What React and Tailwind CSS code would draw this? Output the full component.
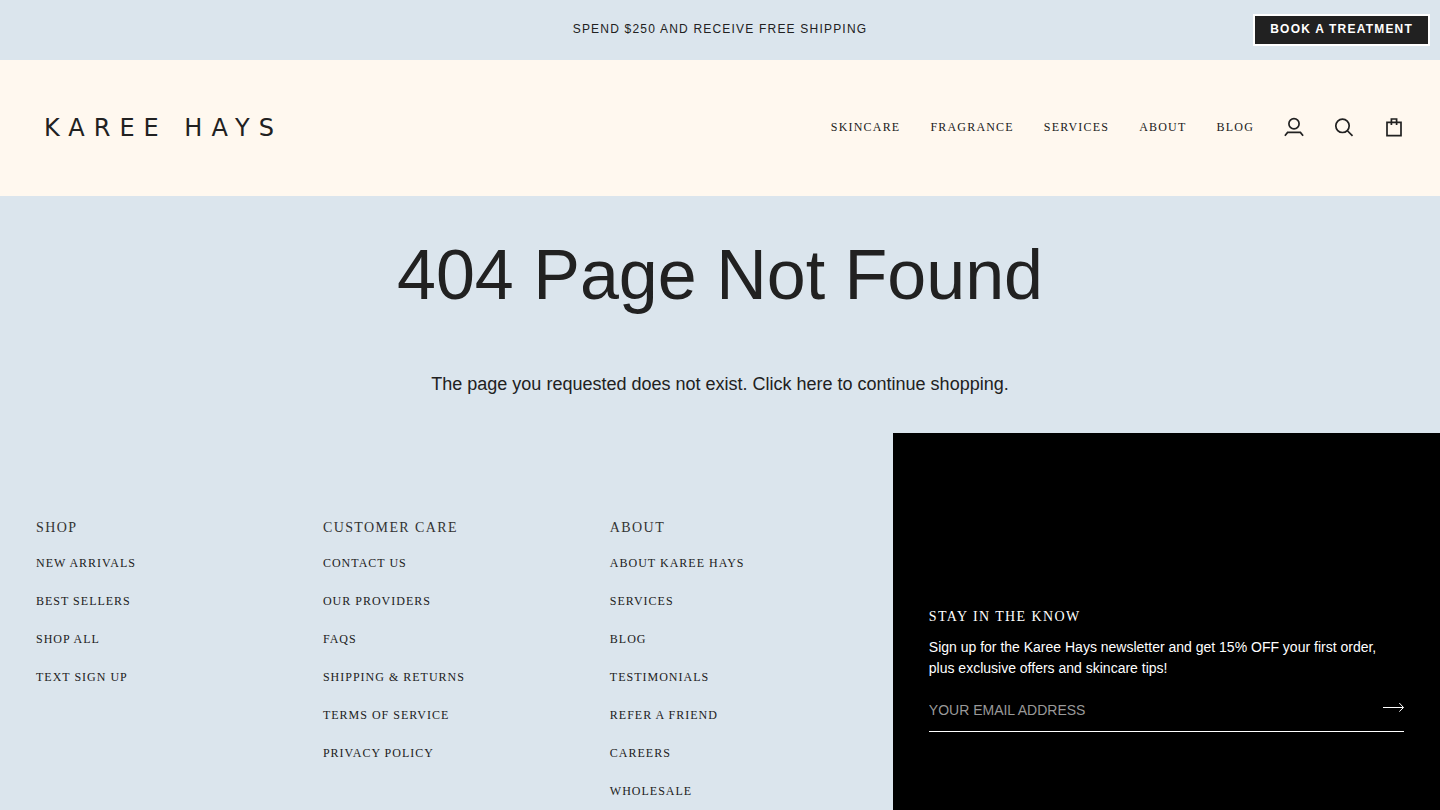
const navLinks = ["Skincare", "Fragrance", "Services", "About", "Blog"];

const footerColumns = [
  { title: "Shop", links: ["New Arrivals", "Best Sellers", "Shop All", "Text Sign Up"] },
  {
    title: "Customer Care",
    links: ["Contact Us", "Our Providers", "FAQs", "Shipping & Returns", "Terms of Service", "Privacy Policy"],
  },
  {
    title: "About",
    links: ["About Karee Hays", "Services", "Blog", "Testimonials", "Refer a Friend", "Careers", "Wholesale"],
  },
];

const sans = "font-['Liberation_Sans',Arial,sans-serif]";
const serif = "font-['Liberation_Serif','Times_New_Roman',serif]";

function AccountIcon() {
  return (
    <svg viewBox="0 0 20 20" className="size-5" fill="none" stroke="currentColor" strokeWidth="1.7" aria-hidden="true">
      <circle cx="10" cy="6.8" r="5.1" />
      <path d="M0.9 18.8 L3.6 15.4 H16.4 L19.1 18.8" />
    </svg>
  );
}

function SearchIcon() {
  return (
    <svg viewBox="0 0 20 20" className="size-5" fill="none" stroke="currentColor" strokeWidth="1.7" aria-hidden="true">
      <circle cx="8.5" cy="8.8" r="6.7" />
      <path d="M13.2 13.5 L18.5 18.8" />
    </svg>
  );
}

function BagIcon() {
  return (
    <svg viewBox="0 0 20 20" className="size-5" fill="none" stroke="currentColor" strokeWidth="1.7" aria-hidden="true">
      <path d="M3 5.4 H17 V18.6 H3 Z" />
      <path d="M7.4 8 V2 H12.6 V8" />
    </svg>
  );
}

function ArrowIcon() {
  return (
    <svg viewBox="0 0 21 10" className="h-[10px] w-[21px]" fill="none" stroke="currentColor" strokeWidth="1" aria-hidden="true">
      <path d="M0 5.5 H20.3 M16.3 1 L20.5 5.5 L16.3 9.6" />
    </svg>
  );
}

function AnnouncementBar() {
  return (
    <div className="grid min-h-[60px] grid-cols-[1fr_auto_1fr] items-center px-[10px] text-xs">
      <p className="col-start-2 pb-[2px] tracking-widest">SPEND $250 AND RECEIVE FREE SHIPPING</p>
      <a
        href="#book"
        className="justify-self-end border-2 border-white bg-[#212121] px-[15px] pt-[5px] pb-[7px] font-bold tracking-widest text-white"
      >
        BOOK A TREATMENT
      </a>
    </div>
  );
}

function Header() {
  return (
    <header className="flex min-h-[136px] items-center justify-between bg-[#fff8ef] pr-9 pb-[2px] pl-11">
      <a href="#home" className="pt-[2px] font-['DejaVu_Sans',sans-serif] text-2xl leading-none tracking-[9px] whitespace-nowrap">
        KAREE HAYS
      </a>
      <div className="flex items-center gap-[30px]">
        <nav className={`flex gap-[30px] pb-px text-xs tracking-widest uppercase ${serif}`}>
          {navLinks.map((label) => (
            <a key={label} href={`#${label.toLowerCase()}`}>
              {label}
            </a>
          ))}
        </nav>
        <a href="#account" aria-label="Account">
          <AccountIcon />
        </a>
        <button type="button" aria-label="Search">
          <SearchIcon />
        </button>
        <button type="button" aria-label="Cart">
          <BagIcon />
        </button>
      </div>
    </header>
  );
}

function Newsletter() {
  return (
    <section className="flex w-[38%] flex-col justify-center bg-black px-9 text-sm text-white">
      <h2 className={`leading-5 tracking-widest ${serif}`}>STAY IN THE KNOW</h2>
      <p className="mt-[10px] leading-[21px]">
        Sign up for the Karee Hays newsletter and get 15% OFF your first order, plus exclusive offers and skincare tips!
      </p>
      <form className="mt-[10px] flex items-center border-b border-white" onSubmit={(e) => e.preventDefault()}>
        <input
          type="email"
          aria-label="Your email address"
          placeholder="YOUR EMAIL ADDRESS"
          className="h-[42px] min-w-0 flex-1 bg-transparent outline-none placeholder:text-[#999999]"
        />
        <button type="submit" aria-label="Subscribe" className="pb-[5px]">
          <ArrowIcon />
        </button>
      </form>
    </section>
  );
}

function Footer() {
  return (
    <footer className="flex">
      <div className="grid w-[62%] grid-cols-3 gap-9 pt-[85px] pr-8 pb-[95px] pl-9">
        {footerColumns.map((column) => (
          <nav key={column.title} aria-label={column.title} className={`uppercase ${serif}`}>
            <h2 className="text-sm leading-5 tracking-widest text-[#333333]">{column.title}</h2>
            <ul className="mt-[6px] text-xs leading-[38px] tracking-[1px] whitespace-nowrap">
              {column.links.map((link) => (
                <li key={link}>
                  <a href="#footer">{link}</a>
                </li>
              ))}
            </ul>
          </nav>
        ))}
      </div>
      <Newsletter />
    </footer>
  );
}

export default function App() {
  return (
    <div className={`bg-[#dbe5ed] text-[#212121] ${sans}`}>
      <AnnouncementBar />
      <Header />
      <main className="px-9 pt-[37px] pb-[35px] text-center">
        <h1 className="text-[70px] leading-[84px]">404 Page Not Found</h1>
        <p className="mt-[54px] text-lg leading-[27px]">
          The page you requested does not exist. Click <a href="#shop">here</a> to continue shopping.
        </p>
      </main>
      <Footer />
    </div>
  );
}
